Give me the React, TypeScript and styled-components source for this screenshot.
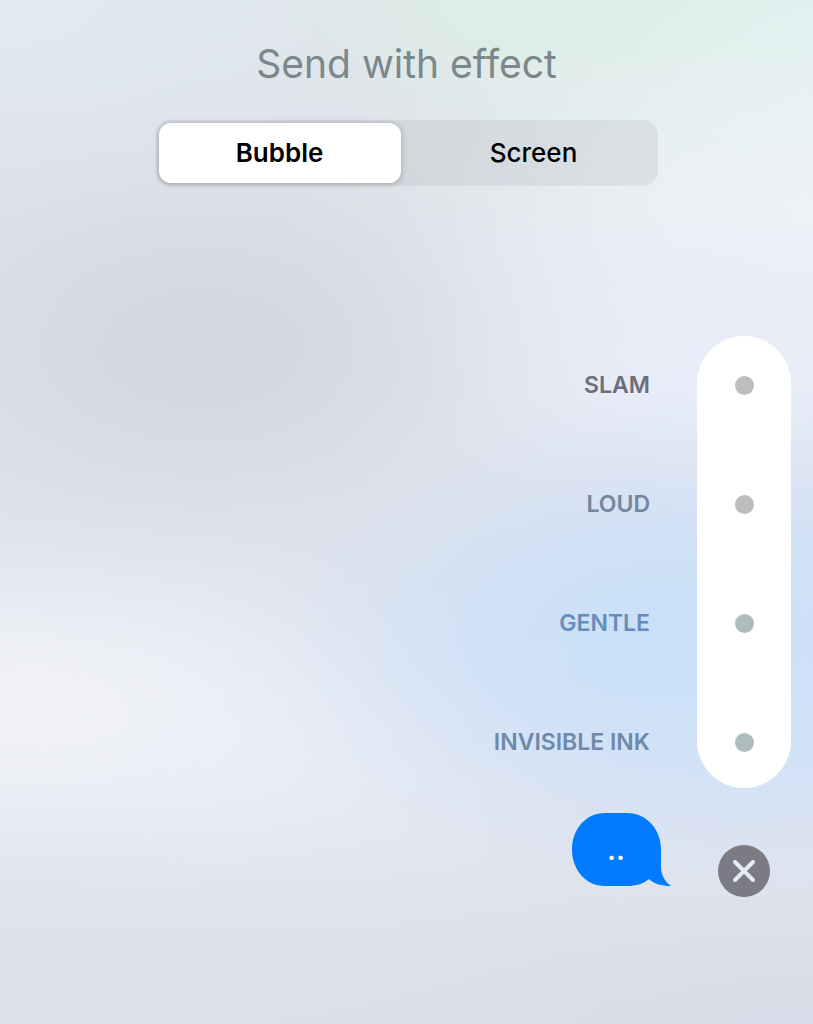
import React, { useState } from "react";
import styled, { createGlobalStyle } from "styled-components";

const GlobalStyle = createGlobalStyle`
  *, *::before, *::after { box-sizing: border-box; }
  body {
    margin: 0;
    font-family: Inter, "Liberation Sans", sans-serif;
    color: #000;
  }
`;

/* A soft patch of colour that fades out evenly to its edge. */
const glow = (at: string, size: string, rgb: string, strength = 1) =>
  `radial-gradient(${size} at ${at}, rgba(${rgb}, ${strength}) 0%, rgba(${rgb}, ${strength * 0.85}) 25%, rgba(${rgb}, ${strength * 0.5}) 50%, rgba(${rgb}, ${strength * 0.15}) 76%, rgba(${rgb}, 0) 100%)`;

const Screen = styled.main`
  min-height: 100vh;
  display: flex;
  flex-direction: column;
  padding: 40px 22px 40px;
  background:
    ${glow("80% 62%", "56% 24%", "202, 224, 248", 0.95)},
    ${glow("100% 66%", "60% 28%", "210, 226, 248", 0.9)},
    ${glow("25% 34%", "48% 22%", "211, 214, 222", 0.9)},
    ${glow("2% 69%", "56% 20%", "240, 242, 247")},
    ${glow("90% 36%", "56% 20%", "232, 237, 249")},
    ${glow("100% 22%", "66% 22%", "238, 243, 247")},
    ${glow("66% 0%", "36% 14%", "221, 238, 230")},
    ${glow("100% 5%", "60% 22%", "226, 242, 239")},
    ${glow("0% 0%", "60% 22%", "226, 233, 242", 0.9)},
    ${glow("35% 73%", "45% 18%", "231, 235, 245")},
    ${glow("100% 102%", "70% 18%", "217, 220, 232")},
    linear-gradient(#dfe5ea 0%, #dee1e8 24%, #dfe2eb 48%, #e2e6ef 70%, #e1e4ed 84%, #dce0e8 100%);
`;

const Title = styled.h1`
  margin: 0;
  text-align: center;
  font-size: 39px;
  line-height: 48px;
  font-weight: 400;
  color: #7b8789;
`;

const Segments = styled.div`
  align-self: center;
  display: grid;
  grid-template-columns: 1fr 1fr;
  gap: 12px;
  width: 66%;
  max-width: 502px;
  height: 66px;
  margin-top: 32px;
  padding: 3px;
  border-radius: 15px;
  background: rgba(120, 124, 132, 0.12);
`;

const Segment = styled.button<{ $active: boolean }>`
  border: 0;
  border-radius: 12px;
  padding: 0;
  font-family: inherit;
  font-size: 26px;
  line-height: 32px;
  font-weight: ${(p) => (p.$active ? 600 : 500)};
  color: #000;
  background: ${(p) => (p.$active ? "#fff" : "transparent")};
  box-shadow: ${(p) => (p.$active ? "0 1px 5px 1px rgba(60, 62, 70, 0.25)" : "none")};
  cursor: pointer;
`;

const Picker = styled.div`
  display: flex;
  justify-content: flex-end;
  gap: 47px;
  margin-top: 150px;
`;

const Column = styled.div`
  display: flex;
  flex-direction: column;
  gap: 95px;
  padding: 37px 0 34px;
`;

const Names = styled(Column)`
  align-items: flex-end;
`;

const Track = styled(Column)`
  align-items: center;
  width: 94px;
  border-radius: 47px;
  background: #fff;
`;

const Name = styled.label<{ $color: string }>`
  font-size: 23px;
  line-height: 24px;
  font-weight: 600;
  color: ${(p) => p.$color};
  cursor: pointer;
`;

const Slot = styled.div`
  display: flex;
  align-items: center;
  height: 24px;
`;

const Dot = styled.input<{ $color: string }>`
  appearance: none;
  width: 19px;
  height: 19px;
  margin: 0;
  border-radius: 50%;
  background: ${(p) => p.$color};
  cursor: pointer;
`;

const Footer = styled.div`
  display: flex;
  justify-content: flex-end;
  align-items: flex-end;
  gap: 47px;
  padding: 25px 21px 0 0;
`;

const Bubble = styled.div`
  position: relative;
  width: 99px;
  height: 73px;
  margin-bottom: 11px;
`;

const BubbleShape = styled.svg`
  position: absolute;
  inset: 0;
`;

const BubbleText = styled.p`
  position: relative;
  margin: 0;
  padding: 19px 11px 0 0;
  text-align: center;
  font-size: 28px;
  line-height: 36px;
  font-weight: 600;
  color: #fff;
`;

const Close = styled.button`
  display: flex;
  align-items: center;
  justify-content: center;
  width: 52px;
  height: 52px;
  padding: 0;
  border: 0;
  border-radius: 50%;
  background: #7a7b83;
  cursor: pointer;
`;

const modes = ["Bubble", "Screen"];

const effects = [
  { id: "slam", name: "SLAM", text: "#6b6e7b", dot: "#bdbdbd" },
  { id: "loud", name: "LOUD", text: "#74879d", dot: "#bdbdbd" },
  { id: "gentle", name: "GENTLE", text: "#668db9", dot: "#adbdbc" },
  { id: "ink", name: "INVISIBLE INK", text: "#6e89a9", dot: "#b0bdbd" },
];

export default function App() {
  const [mode, setMode] = useState("Bubble");

  return (
    <>
      <GlobalStyle />
      <Screen>
        <Title>Send with effect</Title>
        <Segments role="group" aria-label="Effect type">
          {modes.map((m) => (
            <Segment key={m} type="button" $active={m === mode} aria-pressed={m === mode} onClick={() => setMode(m)}>
              {m}
            </Segment>
          ))}
        </Segments>
        <Picker role="radiogroup" aria-label="Bubble effect">
          <Names>
            {effects.map((e) => (
              <Name key={e.id} htmlFor={e.id} $color={e.text}>
                {e.name}
              </Name>
            ))}
          </Names>
          <Track>
            {effects.map((e) => (
              <Slot key={e.id}>
                <Dot type="radio" name="effect" id={e.id} $color={e.dot} />
              </Slot>
            ))}
          </Track>
        </Picker>
        <Footer>
          <Bubble>
            <BubbleShape width="99" height="73" viewBox="0 0 99 73" aria-hidden="true">
              <path
                fill="#007bff"
                d="M33 0H55C74 0 89 16 89 36V54C89 62 93 69 99 73C90 73 82 71 77 66C71 71 64 73 55 73H33C14 73 0 57 0 36.5S14 0 33 0Z"
              />
            </BubbleShape>
            <BubbleText>..</BubbleText>
          </Bubble>
          <Close type="button" aria-label="Close">
            <svg width="22" height="22" viewBox="0 0 22 22" fill="none" stroke="#e6e9f1" strokeWidth="4" strokeLinecap="round" aria-hidden="true">
              <path d="M2 2L20 20M20 2L2 20" />
            </svg>
          </Close>
        </Footer>
      </Screen>
    </>
  );
}
